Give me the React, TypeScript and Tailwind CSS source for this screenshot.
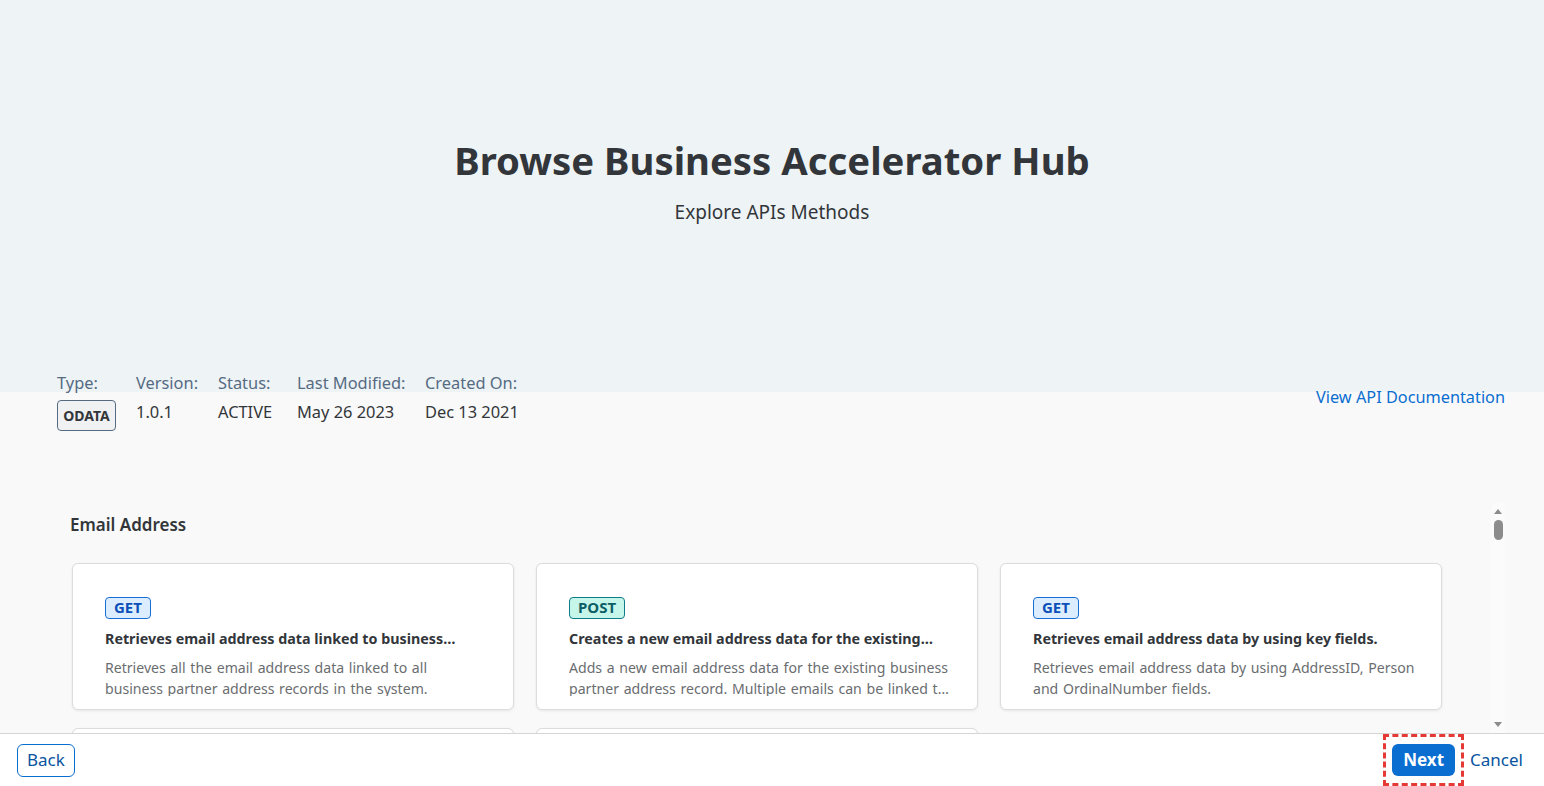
import React from "react";

type Method = "GET" | "POST";

interface ApiCard {
  method: Method;
  title: string;
  description: string;
}

const cards: ApiCard[] = [
  {
    method: "GET",
    title: "Retrieves email address data linked to business partner address records.",
    description:
      "Retrieves all the email address data linked to all business partner address records in the system.",
  },
  {
    method: "POST",
    title: "Creates a new email address data for the existing business partner address record.",
    description:
      "Adds a new email address data for the existing business partner address record. Multiple emails can be linked to one address record.",
  },
  {
    method: "GET",
    title: "Retrieves email address data by using key fields.",
    description:
      "Retrieves email address data by using AddressID, Person and OrdinalNumber fields.",
  },
  {
    method: "GET",
    title: "Updates email address data by using key fields.",
    description: "Updates email address data by using key fields.",
  },
  {
    method: "POST",
    title: "Deletes email address data by using key fields.",
    description: "Deletes email address data by using key fields.",
  },
];

const meta = [
  { label: "Type:", value: "ODATA", width: "w-[59px]", badge: true },
  { label: "Version:", value: "1.0.1", width: "w-[62px]" },
  { label: "Status:", value: "ACTIVE", width: "w-[59px]" },
  { label: "Last Modified:", value: "May 26 2023", width: "w-[108px]" },
  { label: "Created On:", value: "Dec 13 2021", width: "w-[100px]" },
];

const MethodBadge: React.FC<{ method: Method }> = ({ method }) => (
  <span
    className={`inline-flex h-[22px] items-center rounded-[4px] border px-[8px] text-[15px] font-bold leading-none ${
      method === "GET"
        ? "border-[#1a6fd6] bg-[#dcedff] text-[#0b4fb8]"
        : "border-[#0e7c86] bg-[#c6f5ea] text-[#0c5f66]"
    }`}
  >
    {method}
  </span>
);

const Card: React.FC<{ card: ApiCard }> = ({ card }) => (
  <div className="h-[147px] overflow-hidden rounded-[6px] border border-[#dcdcdc] bg-white pl-[32px] pr-[25px] pt-[31px] shadow-[0_1px_3px_rgba(0,0,0,0.08)]">
    <MethodBadge method={card.method} />
    <div className="mt-[10px] line-clamp-1 pr-[7px] text-[14.3px] font-bold leading-[20px] text-[#32363a]">
      {card.title}
    </div>
    <div className="mt-[8px] line-clamp-2 h-[39px] text-[14.1px] leading-[21px] text-[#6a6d70] [word-spacing:1px]">
      {card.description}
    </div>
  </div>
);

export default function App() {
  return (
    <div className="flex h-screen flex-col overflow-hidden bg-[#f9f9f9] font-['Noto_Sans',sans-serif]">
      <main className="flex min-h-0 flex-1 flex-col">
        <header className="flex h-[392px] shrink-0 flex-col items-center bg-[#eef3f6] pt-[133px]">
          <h1 className="text-[38.3px] font-bold leading-[54px] text-[#32363a]">
            Browse Business Accelerator Hub
          </h1>
          <p className="mt-[12px] text-[19px] leading-[26px] text-[#32363a]">
            Explore APIs Methods
          </p>
        </header>

        <div className="-mt-[20px] flex items-start justify-between pl-[57px] pr-[39px]">
          <div className="flex gap-[20px]">
            {meta.map((m) => (
              <div key={m.label} className={`flex flex-col ${m.width}`}>
                <span className="whitespace-nowrap text-[16.4px] leading-[22px] text-[#556b82]">
                  {m.label}
                </span>
                {m.badge ? (
                  <span className="mt-[6px] inline-flex h-[31px] w-[59px] items-center justify-center rounded-[4px] border border-[#556b82] bg-[#eff1f2] text-[14px] font-bold text-[#32363a]">
                    {m.value}
                  </span>
                ) : (
                  <span className="mt-[7px] whitespace-nowrap text-[16.4px] leading-[22px] text-[#32363a]">
                    {m.value}
                  </span>
                )}
              </div>
            ))}
          </div>
          <a className="mt-[14px] text-[16.3px] leading-[22px] text-[#0a6ed1]" href="#">
            View API Documentation
          </a>
        </div>

        <div className="mt-[72px] flex min-h-0 flex-1 pl-[57px] pr-[39px]">
          <div className="min-w-0 flex-1 overflow-hidden pl-[13px]">
            <h2 className="mt-[10px] text-[17px] font-semibold leading-[24px] text-[#32363a]">
              Email Address
            </h2>
            <div className="mt-[26px] grid w-[1372px] grid-cols-[442px_442px_442px] gap-x-[22px] gap-y-[18px] pl-[2px]">
              {cards.map((c, i) => (
                <Card key={i} card={c} />
              ))}
            </div>
          </div>
          <div className="flex w-[14px] shrink-0 flex-col items-center bg-[#fbfbfb] py-[4px]">
            <span className="mt-[2px] h-0 w-0 border-x-[4px] border-b-[5px] border-x-transparent border-b-[#8c8c8c]" />
            <span className="mt-[6px] h-[20px] w-[9px] rounded-full bg-[#8c8c8c]" />
            <span className="flex-1" />
            <span className="mb-[2px] h-0 w-0 border-x-[4px] border-t-[5px] border-x-transparent border-t-[#8c8c8c]" />
          </div>
        </div>
      </main>

      <footer className="flex h-[53px] shrink-0 items-center justify-between border-t border-[#d5d5d5] bg-white pl-[17px] pr-[21px]">
        <button className="h-[33px] rounded-[6px] border border-[#0a6ed1] px-[9px] text-[17px] text-[#0854a0]">
          Back
        </button>
        <div className="flex items-center">
          <div className="flex h-[52px] items-center border-[3px] border-dashed border-[#e53935] px-[6px]">
            <button className="h-[32px] rounded-[6px] bg-[#0a6ed1] px-[11px] text-[17px] font-bold text-white">
              Next
            </button>
          </div>
          <button className="ml-[6px] text-[17px] text-[#0854a0]">Cancel</button>
        </div>
      </footer>
    </div>
  );
}
